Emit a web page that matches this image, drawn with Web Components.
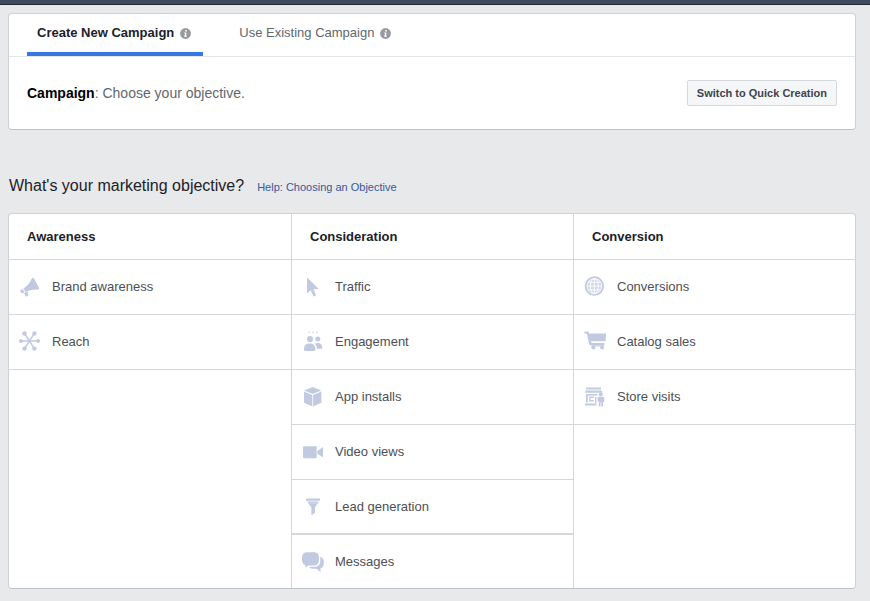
<!DOCTYPE html>
<html lang="en">
<head>
<meta charset="utf-8">
<meta name="viewport" content="width=device-width, initial-scale=1">
<title>Campaign objective</title>
<style>
  body {
    margin: 0;
    background: #e8e9eb;
    color: #4b4f56;
    font-family: "Liberation Sans", Arial, sans-serif;
    font-size: 13px;
    line-height: 18px;
  }
</style>
</head>
<body>

<campaign-page>
  <campaign-card>
    <campaign-tab slot="tabs" selected>Create New Campaign</campaign-tab>
    <campaign-tab slot="tabs">Use Existing Campaign</campaign-tab>
    <b slot="title">Campaign</b>
    <span slot="hint">: Choose your objective.</span>
    <span slot="action">Switch to Quick Creation</span>
  </campaign-card>

  <objective-heading href="#help">
    What's your marketing objective?
    <span slot="link">Help: Choosing an Objective</span>
  </objective-heading>

  <objective-board>
    <objective-column heading="Awareness">
      <objective-item icon="megaphone">Brand awareness</objective-item>
      <objective-item icon="reach">Reach</objective-item>
    </objective-column>
    <objective-column heading="Consideration">
      <objective-item icon="cursor">Traffic</objective-item>
      <objective-item icon="people">Engagement</objective-item>
      <objective-item icon="cube">App installs</objective-item>
      <objective-item icon="video">Video views</objective-item>
      <objective-item icon="funnel" strong>Lead generation</objective-item>
      <objective-item icon="chat" last>Messages</objective-item>
    </objective-column>
    <objective-column heading="Conversion">
      <objective-item icon="globe">Conversions</objective-item>
      <objective-item icon="cart">Catalog sales</objective-item>
      <objective-item icon="store">Store visits</objective-item>
    </objective-column>
  </objective-board>
</campaign-page>

<script>
// all drawn on a 22x22 grid
const icons = {
  megaphone: `
    <path d="M4.4 12.4Q10.4 8.6 12.8 2.4Q13.8 .8 15 2.6L20 11.8Q20.8 13.6 18.8 13.5Q12.4 13.2 6.4 15.9Z"/>
    <path d="M3.6 12.9 5.6 16.2 3.6 17.2Q2.6 17.6 2 16.6L1.4 15.4Q1 14.4 1.8 13.9Z"/>
    <path d="M5 17 9 15.6 8.8 17.8 9.6 19.4 7.6 20.4Q6.8 20.6 6.5 20Z"/>`,
  reach: `
    <path d="M1.7 10H19.3M5.5 2.4 15.4 17.6M15.4 2.4 5.5 17.6" fill="none" stroke="currentColor" stroke-width="1.6"/>
    <circle cx="1.9" cy="10" r="1.9"/><circle cx="19.1" cy="10" r="1.9"/>
    <circle cx="5.5" cy="2.5" r="2.2"/><circle cx="15.4" cy="2.5" r="2.2"/>
    <circle cx="5.5" cy="17.6" r="2.2"/><circle cx="15.4" cy="17.6" r="2.2"/>`,
  cursor: `<path d="M5 1.6V17.6L8.6 14.2 11.6 20.6 14.2 19.4 11.4 13.2 17 12.9Z"/>`,
  people: `
    <circle cx="7.2" cy="1.3" r=".9" opacity=".7"/><circle cx="11" cy="1.3" r=".9" opacity=".7"/><circle cx="14.8" cy="1.3" r=".9" opacity=".7"/>
    <circle cx="8" cy="8" r="3.1"/><circle cx="15.8" cy="8" r="2.5"/>
    <path d="M2 18.4C2 14.6 4 12.5 7.7 12.5S13.4 14.6 13.4 18.4Q13.4 20 11.8 20H3.6Q2 20 2 18.4Z"/>
    <path d="M12.8 12.6Q13.9 11.9 15.6 11.9C18.6 11.9 20.3 13.6 20.3 16.4Q20.3 17.7 19 17.7H14.9Q14.7 14.6 12.8 12.6Z"/>`,
  cube: `
    <path d="M10.7 1 19.2 4.5 10.7 8.1 2.2 4.5Z"/>
    <path d="M2 5.6 10.3 9.1V20.4L2 16.8Z"/>
    <path d="M19.4 5.6 11.1 9.1V20.4L19.4 16.8Z"/>`,
  video: `
    <rect x="1" y="5.3" width="13.6" height="11.9" rx="1"/>
    <path d="M15.2 10.2 21 6V16.6L15.2 12.4Z"/>`,
  funnel: `
    <rect x="4" y="2.6" width="14" height="2.2" rx=".6"/>
    <path d="M5.2 5.6H16.8L12.9 11.6V17L9.4 19.3V11.6Z"/>
    <path d="M8 7.2H14" stroke="#fff" stroke-width=".7" fill="none" opacity=".5"/>`,
  chat: `
    <path d="M5 1.3H12C15.4 1.3 17 3.5 17 6.8V9C17 12.6 15 14.5 12 14.5H6.6L3.2 16.8 3.4 14.2C1.2 13.4 0 11.5 0 9V6.8C0 3.5 1.8 1.3 5 1.3Z"/>
    <path d="M18.3 5.8C20.6 6.4 21.8 8.2 21.8 10.8V12.6C21.8 15 20.7 16.8 18.4 17.4L18.6 20.9 14.4 17.8H12C9.4 17.8 8 17.2 7.2 15.7H12.2C16 15.7 18.3 13.4 18.3 9.4Z"/>`,
  globe: `
    <circle cx="10.4" cy="10.1" r="8.8" fill="none" stroke="currentColor" stroke-width="1.9"/>
    <circle cx="10.4" cy="10.1" r="7.2" opacity=".75"/>
    <g fill="none" stroke="#fff" stroke-width=".9">
      <ellipse cx="10.4" cy="10.1" rx="4" ry="7.4"/>
      <path d="M10.4 2.7V17.5M3 10.1H17.8M4.2 6.3H16.6M4.2 13.9H16.6"/>
    </g>`,
  cart: `
    <path d="M.4 .6H3.8Q4.4 .6 4.6 1.2L5 2.6H22L21.6 10.2H7L7.5 12H20.4V14.4H6.3Q5.5 14.4 5.3 13.6L2.7 2.6H.4Z"/>
    <path d="M8 14H19V16H8Z" opacity=".5"/>
    <circle cx="9.3" cy="16.4" r="2"/><circle cx="18.1" cy="16.4" r="2"/>`,
  store: `
    <path d="M2 1.6H17V3.4H2ZM1.6 4.4H17.4L18.2 6.8H1Z"/>
    <path d="M2 8H3.8V16.6H2ZM2 8H13.4V9.4H2ZM1 17.6H12.6V19.6H1ZM11 11H12.4V17H11Z"/>
    <path d="M5.2 10.6H9.8V15.4H5.2ZM6.5 11.9V14.1H9.8V11.9Z" fill-rule="evenodd"/>
    <circle cx="16.8" cy="8.4" r="2"/>
    <path d="M13.6 11.8Q13.6 10.8 14.6 10.8H19Q20.2 10.8 20.2 12V16H19V20.6H17.3V16.4H16.5V20.6H14.8V15.4H13.6Z"/>`
};

function define(name, render) {
  customElements.define(name, class extends HTMLElement {
    constructor() {
      super();
      this.attachShadow({ mode: "open" });
    }

    connectedCallback() {
      this.shadowRoot.innerHTML = render(this);
    }
  });
}

define("campaign-page", () => `
  <style>
    :host { display: block; }
    .bar {
      height: 4px;
      background: #3e4a5d;
      border-bottom: 1px solid #1f2733;
    }
    main { padding: 8px 14px 12px 8px; }
  </style>
  <div class="bar"></div>
  <main><slot></slot></main>
`);

define("info-icon", () => `
  <style>
    :host { display: block; width: 11px; height: 11px; }
    svg { display: block; }
  </style>
  <svg width="11" height="11" viewBox="0 0 11 11" aria-hidden="true">
    <circle cx="5.5" cy="5.5" r="5.4" fill="#959aa1"/>
    <path d="M5.2 2H6.8V3.5H5.2ZM4.2 4.4H6.5L6 7.6H6.8V8.7H4.1V7.6H4.7L5 5.4H4.2Z" fill="#fff"/>
  </svg>
`);

define("campaign-tab", el => `
  <style>
    :host { display: block; }
    button {
      display: flex;
      align-items: center;
      gap: 6px;
      height: 42px;
      padding: 0 12px 0 10px;
      border: 0;
      border-bottom: 4px solid transparent;
      background: none;
      color: #616770;
      font: inherit;
      cursor: pointer;
    }
    :host([selected]) button {
      border-color: #3578e5;
      color: #1d2129;
      font-weight: bold;
    }
  </style>
  <button role="tab" aria-selected="${el.hasAttribute("selected")}">
    <slot></slot><info-icon></info-icon>
  </button>
`);

define("campaign-card", () => `
  <style>
    :host {
      display: block;
      background: #fff;
      border: 1px solid #cdd0d5;
      border-bottom-color: #bfc2c8;
      border-radius: 4px;
    }
    nav {
      display: flex;
      gap: 26px;
      padding: 0 18px;
      border-bottom: 1px solid #e3e5e8;
    }
    .body {
      display: flex;
      align-items: center;
      justify-content: space-between;
      height: 72px;
      padding: 0 18px;
    }
    p { margin: 0; font-size: 14px; color: #616770; }
    ::slotted(b) { color: #000; }
    button {
      height: 26px;
      padding: 0 9px;
      border: 1px solid #d5d8dd;
      border-radius: 2px;
      background: #f5f6f7;
      color: #3f444c;
      font: bold 11px/16px "Liberation Sans", Arial, sans-serif;
      cursor: pointer;
    }
  </style>
  <nav role="tablist"><slot name="tabs"></slot></nav>
  <div class="body">
    <p><slot name="title"></slot><slot name="hint"></slot></p>
    <button><slot name="action"></slot></button>
  </div>
`);

define("objective-heading", el => `
  <style>
    :host {
      display: flex;
      align-items: baseline;
      gap: 13px;
      padding: 44px 1px 15px;
    }
    h2 {
      margin: 0;
      color: #1d2129;
      font-size: 16px;
      font-weight: normal;
      line-height: 24px;
    }
    a { color: #385898; font-size: 11px; text-decoration: none; }
    a:hover { text-decoration: underline; }
  </style>
  <h2><slot></slot></h2>
  <a href="${el.getAttribute("href")}"><slot name="link"></slot></a>
`);

define("objective-board", () => `
  <style>
    :host {
      display: grid;
      grid-template-columns: repeat(3, 1fr);
      background: #fff;
      border: 1px solid #cdd0d5;
      border-bottom-color: #bfc2c8;
      border-radius: 4px;
    }
    ::slotted(:not(:first-child)) { border-left: 1px solid #d3d6da; }
  </style>
  <slot></slot>
`);

define("objective-column", el => `
  <style>
    :host { display: block; }
    h3 {
      margin: 0;
      padding: 14px 18px 13px;
      border-bottom: 1px solid #d3d6da;
      color: #1d2129;
      font-size: 13px;
      line-height: 18px;
    }
  </style>
  <h3>${el.getAttribute("heading")}</h3>
  <slot></slot>
`);

define("objective-item", el => `
  <style>
    :host { display: block; }
    button {
      display: flex;
      align-items: center;
      gap: 11px;
      box-sizing: border-box;
      width: 100%;
      height: 55px;
      padding: 0 10px;
      border: 0;
      border-bottom: 1px solid #d3d6da;
      background: none;
      color: #4b4f56;
      font: inherit;
      text-align: left;
      cursor: pointer;
    }
    :host([strong]) button { border-bottom-width: 2px; }
    :host([last]) button { height: 53px; border-bottom: 0; }
    svg { flex: none; color: #c1cae0; }
  </style>
  <button>
    <svg width="22" height="22" viewBox="0 0 22 22" fill="currentColor" aria-hidden="true">${icons[el.getAttribute("icon")]}</svg>
    <slot></slot>
  </button>
`);
</script>
</body>
</html>
